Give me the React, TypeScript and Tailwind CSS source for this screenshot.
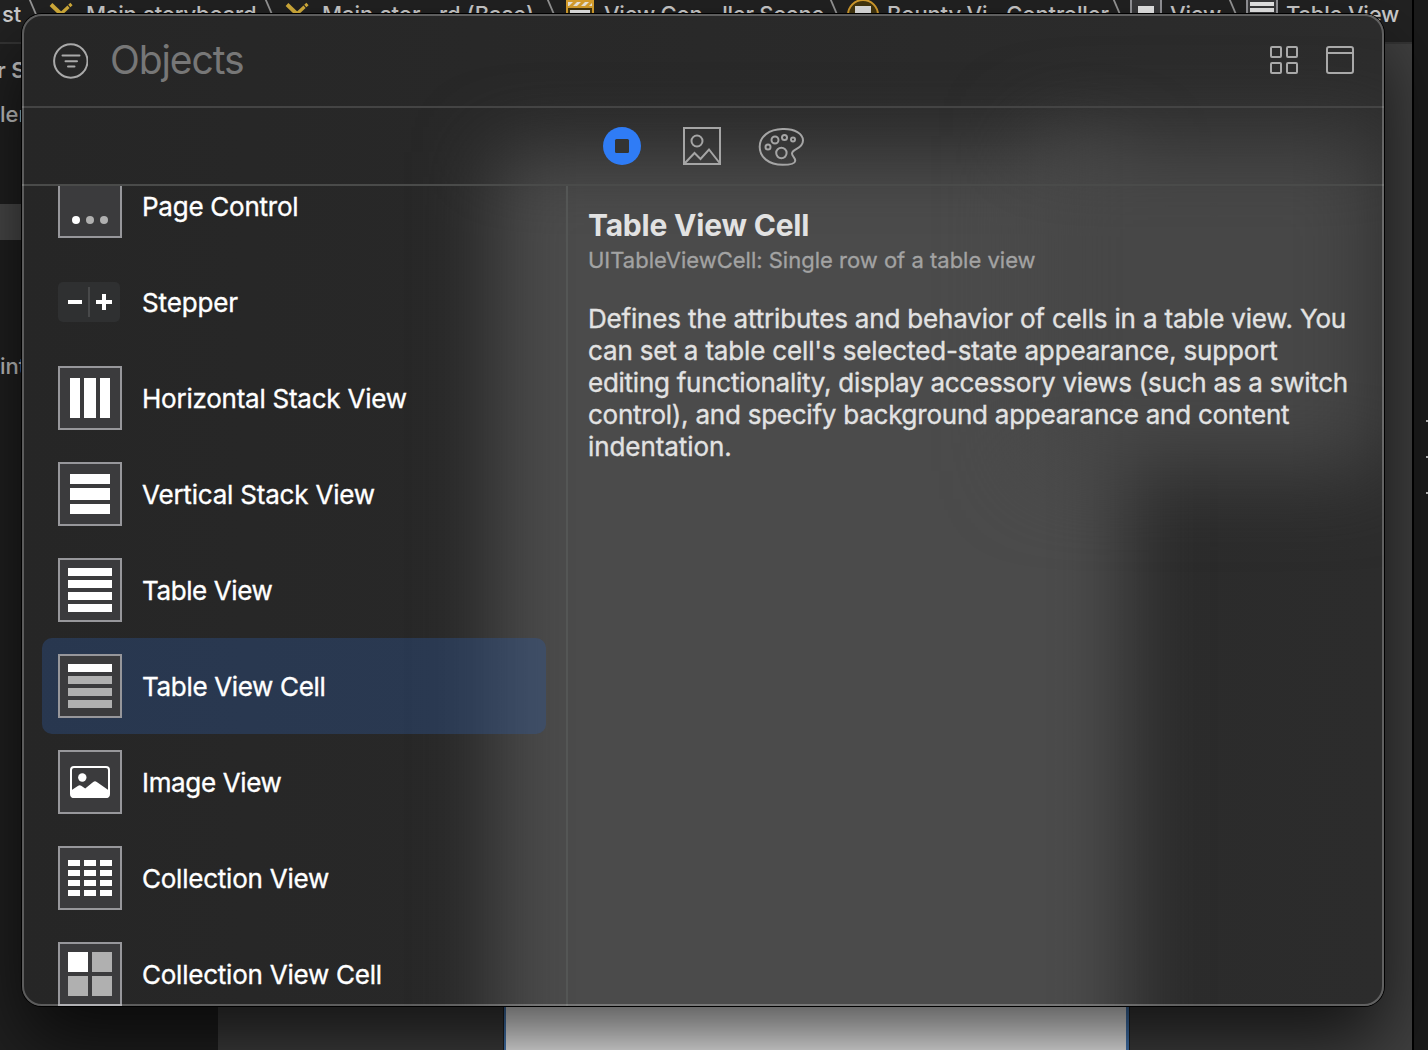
const FONT = 'font-[Inter,"Liberation_Sans",sans-serif]';

type IconProps = { kind: string };

function ObjectIcon({ kind }: IconProps) {
  if (kind === 'stepper') {
    return (
      <svg className="block h-16 w-16 shrink-0" viewBox="0 0 64 64">
        <rect x="0" y="12" width="62" height="40" rx="5" fill="#2f3031" />
        <rect x="30" y="17" width="2" height="30" fill="#48494a" />
        <path d="M10 30h14v4H10zM38 30h16v4H38zM44 24h4v16h-4z" fill="#fff" />
      </svg>
    );
  }
  return (
    <svg className="block h-16 w-16 shrink-0" viewBox="0 0 64 64">
      <rect x="1" y="1" width="62" height="62" fill="#3b3b3d" stroke="#97979b" strokeWidth="2" />
      {kind === 'page' && (
        <>
          <circle cx="18" cy="46" r="4" fill="#fff" />
          <circle cx="32" cy="46" r="4" fill="#b0b0b0" />
          <circle cx="46" cy="46" r="4" fill="#b0b0b0" />
        </>
      )}
      {kind === 'hstack' && <path d="M12 12h10v40H12zM26 12h12v40H26zM42 12h10v40H42z" fill="#fff" />}
      {kind === 'vstack' && <path d="M12 12h40v10H12zM12 26h40v12H12zM12 42h40v10H12z" fill="#fff" />}
      {(kind === 'table' || kind === 'tablecell') &&
        [10, 22, 34, 46].map((y, i) => (
          <rect key={y} x="10" y={y} width="44" height="8" fill={kind === 'table' || i === 0 ? '#fff' : '#b0b0b0'} />
        ))}
      {kind === 'image' && (
        <>
          <rect x="13" y="17" width="38" height="30" rx="3" fill="none" stroke="#fff" strokeWidth="2" />
          <circle cx="24.3" cy="27.5" r="4.2" fill="#fff" />
          <path d="M13 40.500l7.200-4.800q1.500-1 3 0l4 2.800 8-6.600q1.800-1.400 3.600 0L51 40.500V45q0 3-3 3H16q-3 0-3-3z" fill="#fff" />
        </>
      )}
      {kind === 'collection' &&
        [14, 24, 34, 44].map((y) =>
          [10, 26, 42].map((x) => <rect key={`${x}-${y}`} x={x} y={y} width="12" height="6" fill="#fff" />),
        )}
      {kind === 'collectioncell' && (
        <>
          <rect x="10" y="10" width="20" height="20" fill="#fff" />
          <path d="M34 10h20v20H34zM10 34h20v20H10zM34 34h20v20H34z" fill="#b0b0b0" />
        </>
      )}
    </svg>
  );
}

const ITEMS = [
  { kind: 'page', label: 'Page Control', tracking: 'tracking-[-0.25px]' },
  { kind: 'stepper', label: 'Stepper', tracking: 'tracking-[-0.15px]' },
  { kind: 'hstack', label: 'Horizontal Stack View', tracking: 'tracking-[-0.24px]' },
  { kind: 'vstack', label: 'Vertical Stack View', tracking: 'tracking-[-0.2px]' },
  { kind: 'table', label: 'Table View', tracking: 'tracking-[-0.4px]' },
  { kind: 'tablecell', label: 'Table View Cell', tracking: 'tracking-[-0.33px]', selected: true },
  { kind: 'image', label: 'Image View', tracking: 'tracking-[-0.35px]' },
  { kind: 'collection', label: 'Collection View', tracking: 'tracking-[-0.23px]' },
  { kind: 'collectioncell', label: 'Collection View Cell', tracking: 'tracking-[-0.23px]' },
];

const DESCRIPTION = [
  { text: 'Defines the attributes and behavior of cells in a table view. You', tracking: 'tracking-[-0.18px]' },
  { text: "can set a table cell's selected-state appearance, support", tracking: 'tracking-[-0.16px]' },
  { text: 'editing functionality, display accessory views (such as a switch', tracking: 'tracking-[-0.26px]' },
  { text: 'control), and specify background appearance and content', tracking: 'tracking-[-0.24px]' },
  { text: 'indentation.', tracking: 'tracking-[-0.08px]' },
];

const CRUMBS = [
  { icon: 'tools', label: 'Main.storyboard', width: 'w-[236px]', tracking: 'tracking-[-0.2px]' },
  { icon: 'tools', label: 'Main.stor…rd (Base)', width: 'w-[282px]', tracking: 'tracking-[-0.05px]' },
  { icon: 'scene', label: 'View Con…ller Scene', width: 'w-[283px]', tracking: 'tracking-[-0.25px]' },
  { icon: 'controller', label: 'Bounty Vi…Controller', width: 'w-[283px]', tracking: 'tracking-[-0.15px]' },
  { icon: 'view', label: 'View', width: 'w-[116px]', tracking: 'tracking-[-0.2px]' },
  { icon: 'table', label: 'Table View', width: 'w-[186px]', tracking: 'tracking-[-0.2px]' },
];

function CrumbIcon({ kind }: IconProps) {
  if (kind === 'tools') {
    return (
      <svg className="h-7 w-6" viewBox="0 0 24 28">
        <path d="M2 4.500L13 15" stroke="#d9b23c" strokeWidth="4" />
        <path d="M22.500 4L8 17.500" stroke="#d9b23c" strokeWidth="3.200" strokeDasharray="3 1 30" />
      </svg>
    );
  }
  if (kind === 'scene') {
    return (
      <svg className="h-7 w-7 translate-x-px" viewBox="0 0 28 28">
        <rect width="28" height="28" fill="#e0a62f" />
        <rect x="2" y="2" width="24" height="4" fill="#f4efe4" />
        <path d="M3 6l4-4h4l-4 4zM11 6l4-4h4l-4 4zM19 6l4-4h4l-4 4z" fill="#e0a62f" />
        <rect x="2" y="8" width="24" height="20" fill="#463810" />
        <rect x="4" y="10" width="20" height="16" fill="#eee" />
      </svg>
    );
  }
  if (kind === 'controller') {
    return (
      <svg className="-mt-px h-8 w-8 translate-x-px" viewBox="0 0 32 32">
        <circle cx="16" cy="16" r="15" fill="#463810" stroke="#d9a02e" strokeWidth="2" />
        <rect x="8" y="7" width="16" height="14" fill="#e6e6e6" />
      </svg>
    );
  }
  return (
    <svg className="-mt-1.5 h-8 w-8 translate-x-px" viewBox="0 0 32 32">
      <rect x="1" y="1" width="30" height="30" fill="#3b3b3d" stroke="#97979b" strokeWidth="2" />
      <path d={kind === 'view' ? 'M8 12h16v12H8z' : 'M4 8h24v4H4zM4 14h24v4H4zM4 20h24v4H4z'} fill="#eeeeee" />
    </svg>
  );
}

function JumpBar() {
  return (
    <div className="flex h-[42px] shrink-0 items-start bg-[#222222] text-[22px] leading-7 font-medium whitespace-nowrap text-[#cfcfcf]">
      <span className="w-[26px] shrink-0 pl-0.5">st</span>
      {CRUMBS.map((crumb) => (
        <div key={crumb.label} className={`flex shrink-0 items-start ${crumb.width}`}>
          <svg className="-mt-0.5 h-7 w-4 shrink-0" viewBox="0 0 16 28">
            <path d="M3 0l12 28" stroke="#9a9a9a" strokeWidth="1.800" />
          </svg>
          <div className="mr-1.5 flex w-[38px] shrink-0 justify-center">
            <CrumbIcon kind={crumb.icon} />
          </div>
          <span className={crumb.tracking}>{crumb.label}</span>
        </div>
      ))}
    </div>
  );
}

function Backdrop() {
  return (
    <div className="flex h-full overflow-hidden bg-[#1f1f1f]">
      <div className="flex w-[1412px] shrink-0 flex-col">
        <JumpBar />
        <div className="flex min-h-0 flex-1 border-t-2 border-[#353535]">
          <div className="flex w-[218px] shrink-0 flex-col overflow-hidden bg-[#202020] text-[22px] leading-7 font-medium whitespace-nowrap text-[#c8c8c8]">
            <span className="-ml-[3px] mt-3 font-semibold">r S</span>
            <span className="mt-4">ler</span>
            <div className="mt-[76px] h-9 bg-[#4a4a4a]" />
            <span className="mt-28">int</span>
          </div>
          <div className="flex flex-1 bg-[#404040] pl-[286px]">
            <div className="w-[625px] border-r-[3px] border-l-2 border-[#4a80c0] bg-white outline outline-[#222]" />
          </div>
        </div>
      </div>
      <div className="flex flex-1 flex-col items-end gap-[34px] border-l-2 border-black bg-[#1b1b1b] pt-[420px]">
        <div className="h-0.5 w-0.5 bg-[#bbb]" />
        <div className="h-0.5 w-0.5 bg-[#bbb]" />
        <div className="h-0.5 w-0.5 bg-[#bbb]" />
      </div>
    </div>
  );
}

function Glow() {
  return (
    <div className="absolute inset-0 overflow-hidden rounded-[20px] bg-linear-to-r from-[#262626] to-[#2c2c2c]">
      <div className="absolute top-[138px] left-[472px] h-[1000px] w-[634px] bg-[#4b4b4b] blur-[38px]" />
      <div className="absolute top-[122px] left-[1010px] h-[335px] w-[352px] bg-[#474747] blur-[42px]" />
    </div>
  );
}

function Header() {
  return (
    <div className="flex h-[94px] shrink-0 items-center border-b-2 border-[#444444] px-[30px]">
      <svg className="mt-0.5 h-9 w-9" viewBox="0 0 36 36" fill="none" stroke="#a9a9a9" strokeWidth="2">
        <circle cx="18.800" cy="18" r="16.700" />
        <path d="M10.500 12.500h17M13.500 18.300h11.500M16 23.500h6.500" strokeLinecap="round" />
      </svg>
      <span className="ml-[22px] text-[39px] leading-[48px] tracking-[-1.1px] text-[#777777]">Objects</span>
      <div className="ml-auto flex items-center gap-7">
        <svg className="h-7 w-7" viewBox="0 0 28 28" fill="none" stroke="#a9a9a9" strokeWidth="2">
          <rect x="1" y="1" width="10" height="10" rx="1" />
          <rect x="17" y="1" width="10" height="10" rx="1" />
          <rect x="1" y="17" width="10" height="10" rx="1" />
          <rect x="17" y="17" width="10" height="10" rx="1" />
        </svg>
        <svg className="h-7 w-7" viewBox="0 0 28 28" fill="none" stroke="#a9a9a9" strokeWidth="2">
          <rect x="1" y="1" width="26" height="26" rx="2" />
          <path d="M1 7h26" />
        </svg>
      </div>
    </div>
  );
}

function Tabs() {
  return (
    <div className="flex h-[78px] shrink-0 items-center gap-[42px] border-b-2 border-[#4a4b4a] pl-[581px]">
      <svg className="h-[38px] w-[38px]" viewBox="0 0 38 38">
        <circle cx="19" cy="19" r="19" fill="#2f7cf6" />
        <rect x="12" y="12" width="14" height="14" rx="1.500" fill="#333433" />
      </svg>
      <svg className="h-[38px] w-[38px]" viewBox="0 0 38 38" fill="none" stroke="#a5a5a5" strokeWidth="2">
        <rect x="1" y="1" width="36" height="36" />
        <circle cx="14" cy="14" r="5.500" />
        <path d="M1.500 36.500L11.500 26l6 6L26 22.500 37 36.500" />
      </svg>
      <svg className="-ml-1.5 h-10 w-12" viewBox="0 0 48 40" fill="none" stroke="#a5a5a5" strokeWidth="2">
        <path d="M25.500 3C38 2.500 46 8 46 14.500c0 8.500-11 8.500-11 13 0 3 3.500 4 3.200 7.500-.3 3-6 3.800-12.500 3.800C11.500 38.800 2.700 31 2.700 20.800 2.700 10.500 12 3.300 25.500 3z" />
        <circle cx="11" cy="21" r="2.500" />
        <circle cx="18" cy="14" r="3.500" />
        <circle cx="27.500" cy="11.500" r="2.500" />
        <circle cx="36" cy="13.500" r="2" />
        <circle cx="24.400" cy="27" r="5.200" />
      </svg>
    </div>
  );
}

function ObjectList() {
  return (
    <div className="w-[546px] shrink-0 overflow-hidden border-r-2 border-[#545655]">
      <div className="-mt-7 ml-5 w-[504px]">
        {ITEMS.map((item) => (
          <div
            key={item.kind}
            className={'flex h-24 items-center rounded-[10px] pl-4 ' + (item.selected ? 'bg-[rgba(46,89,158,0.35)]' : '')}
          >
            <ObjectIcon kind={item.kind} />
            <span
              className={`mt-0.5 ml-5 text-[26px] leading-8 whitespace-nowrap text-white [-webkit-text-stroke:0.35px] ${item.tracking}`}
            >
              {item.label}
            </span>
          </div>
        ))}
      </div>
    </div>
  );
}

function Detail() {
  return (
    <div className="flex-1 pt-[21px] pl-5 text-[#e2e2e2]">
      <h1 className="text-[30px] leading-9 font-bold tracking-[-0.2px] whitespace-nowrap">Table View Cell</h1>
      <p className="mt-[3px] text-[22px] leading-7 whitespace-nowrap text-[#a3a3a3] [-webkit-text-stroke:0.3px]">
        UITableViewCell: Single row of a table view
      </p>
      <p className="mt-[29px] text-[26px] leading-8 whitespace-nowrap [-webkit-text-stroke:0.35px]">
        {DESCRIPTION.map((line) => (
          <span key={line.text} className={`block ${line.tracking}`}>
            {line.text}
          </span>
        ))}
      </p>
    </div>
  );
}

export default function App() {
  return (
    <div className={`relative h-[1050px] w-[1428px] overflow-hidden ${FONT}`}>
      <Backdrop />
      <div className="absolute top-[14px] left-[22px] h-[992px] w-[1362px] rounded-[20px] shadow-[0_0_0_1px_#000,0_36px_76px_rgba(0,0,0,0.7)]">
        <Glow />
        <div className="absolute inset-0 flex flex-col overflow-hidden rounded-[20px]">
          <Header />
          <Tabs />
          <div className="flex min-h-0 flex-1">
            <ObjectList />
            <Detail />
          </div>
        </div>
        <div className="pointer-events-none absolute inset-0 rounded-[20px] border-2 border-white/25" />
      </div>
    </div>
  );
}
